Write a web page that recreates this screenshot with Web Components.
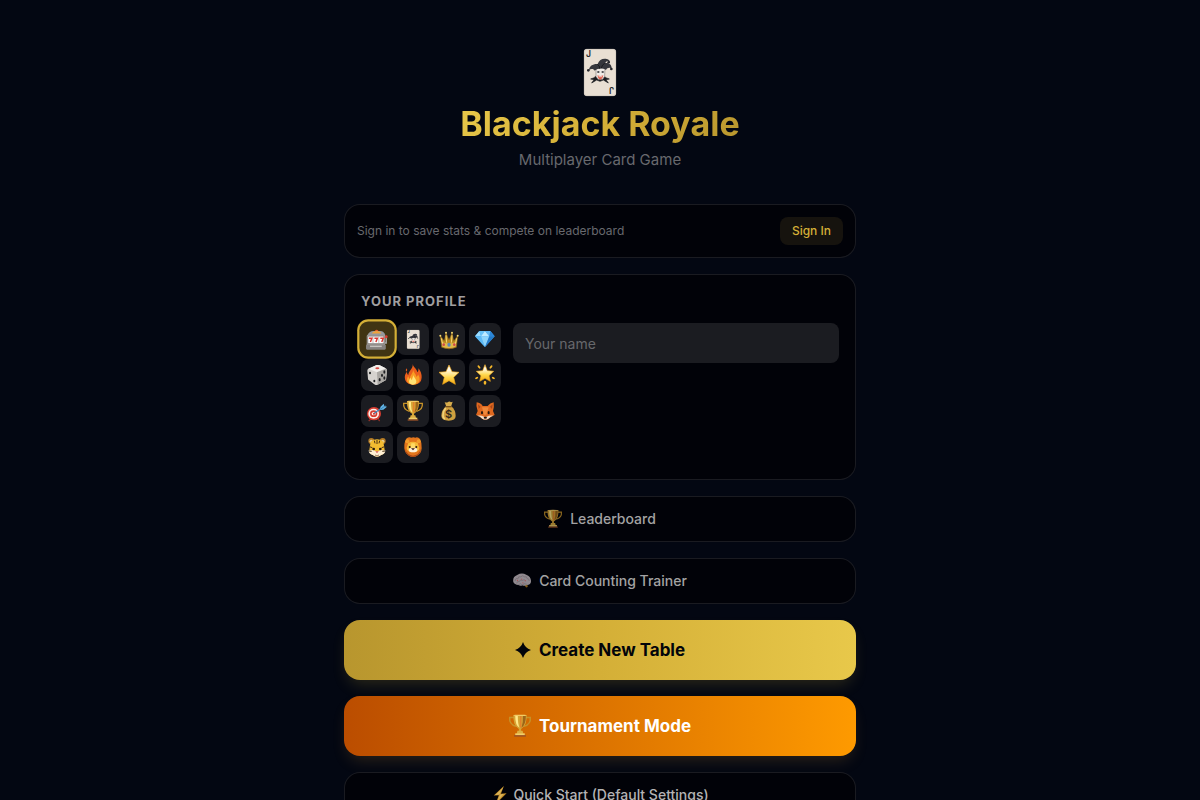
<!DOCTYPE html>
<html lang="en">
<head>
<meta charset="utf-8">
<meta name="viewport" content="width=device-width, initial-scale=1">
<title>Blackjack Royale</title>
<style>
  :root {
    --bg: #030712;
    --panel: #010208;
    --line: rgba(255, 255, 255, .1);
    --gold: #d4af37;
    --gold-light: #e8c84a;
    --gold-dark: #b8962e;
  }
  body {
    margin: 0;
    min-height: 100vh;
    background: var(--bg);
    color: #fff;
    font-family: Inter, "Liberation Sans", sans-serif;
    font-size: 14px;
    line-height: 20px;
  }
</style>
</head>
<body>
<lobby-page></lobby-page>

<script>
const JOKER = `
  <rect width="96" height="141" rx="8" fill="#e9dfd3"/>
  <rect x="1" y="1" width="94" height="139" rx="7" fill="none" stroke="#cfc6bb" stroke-width="2"/>
  <text x="6" y="25" font-family="Inter, sans-serif" font-size="26" font-weight="600" fill="#25272c">J</text>
  <text x="-90" y="-115" transform="rotate(180)" font-family="Inter, sans-serif" font-size="26" font-weight="600" fill="#25272c">J</text>
  <path d="M48 97l-10-4-15 9 7-10-10-2 11-4 3-4 14 9 14-9 3 4 11 4-10 2 7 10-15-9z" fill="#1b1c20" stroke="#1b1c20" stroke-width="2"/>
  <path d="M36 57h27l-1 25-6 9h-14l-6-9z" fill="#f0ebe6" stroke="#8d8783" stroke-width="2"/>
  <path d="M40 79q9 4 18 0l-3 9-6 4-6-4z" fill="#e0604e"/>
  <path d="M44 83h10" stroke="#fff" stroke-width="2"/>
  <path d="M40 69h6M53 69h6" stroke="#26272b" stroke-width="4"/>
  <path d="M32 65c-3-6-10-7-17-2 1-12 12-19 26-18 4-12 13-17 24-16 9 1 13 5 13 10-7-4-12-2-14 3 13-1 19 6 19 16-8-4-14-1-17 5-10-6-24-6-34 2z" fill="#35363c"/>
  <path d="M40 46q8 4 7 13M62 43q-8 4-10 14" stroke="#191a1e" stroke-width="3" fill="none"/>
  <circle cx="13" cy="64" r="4" fill="#25262b"/><circle cx="74" cy="40" r="4" fill="#25262b"/><circle cx="82" cy="60" r="4" fill="#25262b"/>`;

const ICONS = {
  slot: `
    <path d="M73 43v16H67" fill="none" stroke="#aaa9aa" stroke-width="4"/><circle cx="73" cy="42" r="4" fill="#dc3b32"/>
    <path d="M23 36q4-9 15-10h19q10 1 13 10v5H23z" fill="#96989d"/><path d="M34 33q3-7 13-7t13 7z" fill="#f2a33a"/><path d="M42 26q5-6 10 0z" fill="#e8592c"/>
    <rect x="20" y="37" width="50" height="35" rx="3" fill="#a8a5a2"/><rect x="23" y="40" width="44" height="21" fill="#fff" stroke="#706c68" stroke-width="2"/>
    <path d="M37 41v19M53 41v19" stroke="#aaa" stroke-width="2"/>
    <path d="M26 46h8l-4 10M41 46h8l-4 10M57 46h8l-4 10" fill="none" stroke="#d9362e" stroke-width="4"/>
    <rect x="18" y="63" width="54" height="14" rx="3" fill="#85827f"/><path d="M29 68h32" stroke="#c7c4c0" stroke-width="4"/>`,
  joker: `<g transform="translate(30 21) scale(.39 .4)">${JOKER}</g>`,
  crown: `
    <path d="M22 38l12 17 5-25 9 22 9-22 5 25 12-17-4 35q-22 9-44 0z" fill="#c8992b" stroke="#8f6518" stroke-width="2"/>
    <path d="M25 45l9 12 5-20 9 17 9-17 5 20 9-12-1 14H26z" fill="#b8871f"/>
    <path d="M27 57q21 9 42 0l-2 14q-19 8-38 0z" fill="#dfb94a"/>
    <path d="M25 46l5 22M39 37l2 22M57 37l-2 22M71 46l-5 22" stroke="#f4d872" stroke-width="3"/>
    <circle cx="22" cy="38" r="3" fill="#f4d872"/><circle cx="39" cy="29" r="3" fill="#f4d872"/><circle cx="57" cy="29" r="3" fill="#f4d872"/><circle cx="74" cy="38" r="3" fill="#f4d872"/>
    <ellipse cx="48" cy="65" rx="5" ry="6" fill="#5c86b8"/><circle cx="32" cy="65" r="4" fill="#d44848"/><circle cx="64" cy="65" r="4" fill="#d44848"/>`,
  gem: `
    <path d="M31 24h33l13 16-29 32-30-32z" fill="#41a3ec"/><path d="M31 24l-13 16h18z" fill="#9bdcff"/><path d="M31 24h17L36 40z" fill="#67c2f8"/>
    <path d="M48 24l13 16H36z" fill="#bfeaff"/><path d="M48 24h16l-3 16z" fill="#63b9f4"/><path d="M64 24l13 16H61z" fill="#2c86d8"/>
    <path d="M18 40h18l12 32z" fill="#5dbaf5"/><path d="M36 40h25L48 72z" fill="#8ed4fb"/><path d="M61 40h16L48 72z" fill="#247ac9"/>`,
  die: `
    <path d="M22 29l25-11q5-1 9 1l18 9q4 2 4 7l-3 28-25 14q-4 2-8 0L24 64q-3-2-3-5l-2-24q0-4 3-6z" fill="#d6d3cf"/>
    <path d="M22 29l25-11q5-1 9 1l18 9-26 12z" fill="#f1efec"/><path d="M48 40l28-11q2 2 2 6l-3 28-25 14z" fill="#aaa7a3"/>
    <ellipse cx="49" cy="28" rx="6" ry="3" fill="#d94b43"/>
    <g fill="#202124"><ellipse cx="27" cy="42" rx="3" ry="4"/><ellipse cx="40" cy="66" rx="3" ry="4"/><ellipse cx="70" cy="39" rx="3" ry="5"/><ellipse cx="63" cy="49" rx="3" ry="5"/><ellipse cx="56" cy="62" rx="3" ry="5"/><ellipse cx="70" cy="57" rx="3" ry="5"/></g>`,
  fire: `
    <path d="M47 15c2 10 13 14 14 25 3-3 4-7 3-12 9 9 13 26 8 37-4 8-13 12-24 12-13 0-22-7-24-17-2-9 1-16 6-22 0 5 1 8 4 10 0-13 15-18 13-33z" fill="#ea5e1c"/>
    <path d="M48 32c2 9 10 13 10 22 3-2 5-5 5-8 6 9 7 19 1 25-8 8-27 7-32-1-4-6-2-14 2-19 1 5 2 7 5 8-1-10 10-16 9-27z" fill="#f99d24"/>
    <path d="M49 48c1 7 10 13 9 21-1 6-6 8-11 8-7 0-12-5-11-11 1-5 4-8 6-10 0 4 1 6 3 7 0-6 4-9 4-15z" fill="#ffe374"/>
    <path d="M29 28q-5 6-1 10 5-4 1-10z" fill="#ea5e1c"/>`,
  star: `
    <defs><linearGradient id="s" x1="0" y1="0" x2="0" y2="1"><stop offset=".25" stop-color="#fff9e6"/><stop offset=".65" stop-color="#ffd84d"/><stop offset="1" stop-color="#f4a50e"/></linearGradient></defs>
    <path d="M48 18l9 20 21 2-16 15 5 21-19-11-19 11 5-21-16-15 21-2z" fill="url(#s)" stroke="#f2a91b" stroke-width="2" stroke-linejoin="round"/>`,
  glow: `
    <defs><linearGradient id="g" x1="0" y1="0" x2="0" y2="1"><stop offset=".25" stop-color="#fff9e6"/><stop offset=".6" stop-color="#ffd84d"/><stop offset="1" stop-color="#f4a50e"/></linearGradient></defs>
    <path d="M48 17l7 18 19 2-14 13 4 17-16-9-16 9 4-17-14-13 19-2z" fill="url(#g)" stroke="#f2a91b" stroke-width="2" stroke-linejoin="round"/>
    <g fill="#f5b72a"><ellipse cx="30" cy="24" rx="3" ry="6" transform="rotate(-38 30 24)"/><ellipse cx="66" cy="24" rx="3" ry="6" transform="rotate(38 66 24)"/><ellipse cx="23" cy="57" rx="3" ry="5" transform="rotate(60 23 57)"/><ellipse cx="73" cy="57" rx="3" ry="5" transform="rotate(-60 73 57)"/><ellipse cx="48" cy="71" rx="4" ry="6"/></g>`,
  target: `
    <path d="M29 73l-6 5M52 73l4 5" stroke="#913026" stroke-width="4"/>
    <ellipse cx="39" cy="56" rx="21" ry="20" fill="#d73d31"/><ellipse cx="38" cy="56" rx="16" ry="15" fill="#fff0e9"/><ellipse cx="38" cy="56" rx="11" ry="10" fill="#d73d31"/><ellipse cx="38" cy="56" rx="6" ry="5" fill="#fff0e9"/><circle cx="39" cy="56" r="3" fill="#c62d26"/>
    <path d="M40 55l25-18" stroke="#3885bd" stroke-width="4"/><path d="M58 36l10-10 2 7 8 2-11 9-9 1z" fill="#62b4e4"/><path d="M60 42l14-11" stroke="#28699b" stroke-width="2"/>`,
  trophy: `
    <path d="M32 25H20q-2 18 17 24M64 25h12q2 18-17 24" fill="none" stroke="#c69229" stroke-width="4"/>
    <path d="M30 18h36q1 26-11 35l-4 3v9h-6v-9l-4-3Q29 44 30 18z" fill="#d5a334"/>
    <path d="M35 20h7q0 24 5 33-12-5-12-33z" fill="#ffe888"/><path d="M56 20h8q0 25-12 33 5-13 4-33z" fill="#9b651a"/><path d="M48 20h4v32h-4z" fill="#e4812b"/>
    <ellipse cx="48" cy="19" rx="18" ry="2" fill="#f3cb65"/><path d="M41 61h14l2 8H39z" fill="#dcae40"/><path d="M35 68h26v6H35z" fill="#f1cf69"/><path d="M32 73h32v4H32z" fill="#985026"/>`,
  money: `
    <path d="M35 21q6 3 10 0 5-3 9 1l5-2-5 15H40z" fill="#d8ad4d"/>
    <path d="M39 34h16q13 11 13 29 0 14-21 14T25 63q0-17 14-29z" fill="#cfa03f"/><path d="M38 39q-8 10-8 22 0 9 6 11" fill="none" stroke="#f1d17b" stroke-width="5"/>
    <path d="M38 35h18" stroke="#7b5420" stroke-width="4"/><text x="47" y="69" text-anchor="middle" font-family="Inter, sans-serif" font-size="33" font-weight="600" fill="#33291c">$</text>`,
  fox: `
    <path d="M23 22q13 2 18 11h15q7-9 18-11 2 13-2 26l5 12q-11 3-18 11-10 6-20 0-6-8-18-11l5-12q-6-14-3-26z" fill="#df681f"/>
    <path d="M27 28l8 7-6 7zM71 28l-8 7 6 7z" fill="#a8481b"/><path d="M39 37h20l-7 22h-7z" fill="#f0893b"/>
    <path d="M24 62q12-2 21 3l4 2 4-2q9-5 21-3-10 2-16 9-9 5-18 0-6-7-16-9z" fill="#f4dfc9"/>
    <ellipse cx="39" cy="53" rx="3" ry="5" fill="#24170f"/><ellipse cx="59" cy="53" rx="3" ry="5" fill="#24170f"/><ellipse cx="49" cy="68" rx="5" ry="3" fill="#1d1512"/>`,
  tiger: `
    <circle cx="31" cy="30" r="9" fill="#b57b24"/><circle cx="65" cy="30" r="9" fill="#b57b24"/><circle cx="31" cy="31" r="5" fill="#e6cd91"/><circle cx="65" cy="31" r="5" fill="#e6cd91"/>
    <path d="M29 32q19-14 38 0l4 25q2 11-11 15-12 10-24 0-13-4-11-15z" fill="#f3bc31"/>
    <path d="M23 58l14-1 11 5 11-5 14 1q0 11-12 14-13 10-26 0-12-3-12-14z" fill="#fff0d5"/>
    <path d="M48 27v12M40 29l2 8M56 29l-2 8M25 47l9 3M71 47l-9 3M24 60l8 1M72 60l-8 1" stroke="#493115" stroke-width="3"/>
    <circle cx="38" cy="54" r="4" fill="#241c10"/><circle cx="58" cy="54" r="4" fill="#241c10"/><path d="M43 61h10l-5 6z" fill="#d95f5c"/><path d="M42 72q6 5 12 0" stroke="#6e452a" stroke-width="2" fill="none"/>`,
  lion: `
    <path d="M29 22q7-5 14-2 6-3 12 0 8-3 14 4 6 11 5 28-1 16-14 22-12 7-24 0-12-6-14-22-1-19 7-30z" fill="#e3751c"/>
    <path d="M24 53q5 18 24 21 19-3 24-21 0 14-12 21-12 7-24 0-11-6-12-21z" fill="#a84616"/>
    <circle cx="31" cy="31" r="6" fill="#f19d2b"/><circle cx="65" cy="31" r="6" fill="#f19d2b"/>
    <path d="M34 36q14-8 28 0l5 14q0 13-19 14-19-1-19-14z" fill="#f6bb38"/><path d="M43 37h10l2 16H41z" fill="#ffda65"/>
    <ellipse cx="48" cy="57" rx="13" ry="7" fill="#fff0d8"/><circle cx="38" cy="48" r="3" fill="#2b1b12"/><circle cx="58" cy="48" r="3" fill="#2b1b12"/><path d="M42 52h12l-6 6z" fill="#3c1c14"/>`,
  brain: `
    <path d="M54 60l12-2 1 10q-7 4-9-4z" fill="#b8801f"/>
    <path d="M19 51q-3-17 13-23 15-9 30-1 15 5 16 20 1 13-14 14-7 5-15 1-6 4-13-1-13-1-17-10z" fill="#cdc3c8"/>
    <path d="M25 48q1-11 9-7 1-10 10-7 7-7 12 0 9-3 9 6 8 0 7 8M30 56q1-8 9-6 3-9 10-4 7-6 11 2M36 60q8-6 13 1 6-7 15-2" fill="none" stroke="#958a92" stroke-width="2"/>
    <circle cx="33" cy="46" r="2" fill="#f27573"/><circle cx="47" cy="42" r="2" fill="#f27573"/><circle cx="59" cy="47" r="2" fill="#f27573"/><circle cx="51" cy="54" r="2" fill="#f27573"/>`,
  spark: `<path d="M48 18q7 22 30 30-23 8-30 30-7-22-30-30 23-8 30-30z" fill="#02040a"/>`,
  bolt: `<path d="M61 18L27 50l17-1-11 30 37-37-19 2z" fill="#e7a52c"/><path d="M59 22L32 48l16-2-9 23 22-24-15 1z" fill="#ffd46a"/>`,
};

class GameIcon extends HTMLElement {
  connectedCallback() {
    const name = this.getAttribute('name');
    const root = this.attachShadow({ mode: 'open' });
    const box = name === 'card' ? '0 0 96 141' : '18 18 60 60';
    root.innerHTML = `
      <style>
        :host { display: block; flex: none; width: var(--icon-size, 20px); height: var(--icon-size, 20px); }
        :host([name="card"]) { width: 32px; height: 47px; }
        svg { display: block; width: 100%; height: 100%; overflow: visible; }
      </style>
      <svg viewBox="${box}" aria-hidden="true">${name === 'card' ? JOKER : ICONS[name]}</svg>`;
  }
}
customElements.define('game-icon', GameIcon);

class LobbyHeader extends HTMLElement {
  connectedCallback() {
    this.attachShadow({ mode: 'open' }).innerHTML = `
      <style>
        :host { display: block; text-align: center; margin-bottom: 16px; }
        .logo { display: flex; justify-content: center; align-items: end; height: 48px; margin-bottom: 8px; }
        h1 { margin: 0 auto 4px; width: max-content; max-width: 100%; font-size: 34px; line-height: 40px; font-weight: 700;
          background: linear-gradient(135deg, var(--gold-light), var(--gold) 50%, var(--gold-dark));
          background-clip: text; -webkit-background-clip: text; color: transparent; }
        p { margin: 0; font-size: 15px; line-height: 24px; color: #68696e; }
      </style>
      <header>
        <div class="logo"><game-icon name="card"></game-icon></div>
        <h1><slot></slot></h1>
        <p><slot name="tagline"></slot></p>
      </header>`;
  }
}
customElements.define('lobby-header', LobbyHeader);

class SignInBar extends HTMLElement {
  connectedCallback() {
    this.attachShadow({ mode: 'open' }).innerHTML = `
      <style>
        :host { display: flex; justify-content: space-between; align-items: center; gap: 12px;
          padding: 12px; border: 1px solid var(--line); border-radius: 16px; background: var(--panel);
          font-size: 12px; line-height: 16px; color: #68696e; }
        button { flex: none; padding: 6px 12px; border: 0; border-radius: 8px; background: #16130e; color: var(--gold);
          font: inherit; font-weight: 500; cursor: pointer; }
      </style>
      <span><slot></slot></span>
      <button type="button">Sign In</button>`;
  }
}
customElements.define('sign-in-bar', SignInBar);

class AvatarPicker extends HTMLElement {
  connectedCallback() {
    const names = ['slot', 'joker', 'crown', 'gem', 'die', 'fire', 'star', 'glow', 'target', 'trophy', 'money', 'fox', 'tiger', 'lion'];
    const root = this.attachShadow({ mode: 'open' });
    root.innerHTML = `
      <style>
        :host { display: grid; flex: none; grid-template-columns: repeat(4, 32px); grid-auto-rows: 32px; gap: 4px; }
        button { display: flex; align-items: center; justify-content: center; padding: 0; border: 0; border-radius: 8px;
          background: #1b1c21; cursor: pointer; }
        button[aria-pressed="true"] { background: #403413; box-shadow: 0 0 0 2px var(--gold); transform: scale(1.1); }
      </style>
      ${names.map((n, i) => `<button type="button" aria-label="${n}" aria-pressed="${i === 0}"><game-icon name="${n}"></game-icon></button>`).join('')}`;
    root.addEventListener('click', (e) => {
      const hit = e.target.closest('button');
      if (hit) root.querySelectorAll('button').forEach((b) => b.setAttribute('aria-pressed', b === hit));
    });
  }
}
customElements.define('avatar-picker', AvatarPicker);

class ProfileCard extends HTMLElement {
  connectedCallback() {
    this.attachShadow({ mode: 'open' }).innerHTML = `
      <style>
        :host { display: block; padding: 16px; border: 1px solid var(--line); border-radius: 16px; background: var(--panel); }
        h2 { margin: 0 0 12px; font-size: 13px; line-height: 20px; font-weight: 700; letter-spacing: 1px;
          text-transform: uppercase; color: #a09fa0; }
        .row { display: flex; align-items: flex-start; gap: 12px; }
        label { flex: 1; min-width: 0; }
        input { display: block; box-sizing: border-box; width: 100%; height: 40px; padding: 0 12px; border: 0; border-radius: 8px;
          background: #1b1c21; color: #fff; font: inherit; outline-color: var(--gold); }
        input::placeholder { color: #67686c; opacity: 1; }
      </style>
      <h2><slot></slot></h2>
      <div class="row">
        <avatar-picker></avatar-picker>
        <label><input type="text" placeholder="Your name" aria-label="Your name"></label>
      </div>`;
  }
}
customElements.define('profile-card', ProfileCard);

class ActionButton extends HTMLElement {
  connectedCallback() {
    this.attachShadow({ mode: 'open' }).innerHTML = `
      <style>
        :host { display: block; --icon-size: 18px; }
        button { display: flex; justify-content: center; align-items: center; gap: 8px; width: 100%; padding: 12px;
          border: 1px solid var(--line); border-radius: 16px; background: var(--panel); color: #a3a2a3;
          font: inherit; font-weight: 500; cursor: pointer; }
        game-icon { opacity: .7; }
        :host([kind="quick"]) button { gap: 4px; color: #b4b3b4; }
        :host([kind="quick"]) game-icon { opacity: .85; }
        :host([kind="gold"]) button, :host([kind="orange"]) button { padding: 16px; border: 0; font-size: 17px; line-height: 28px; font-weight: 700; }
        :host([kind="gold"]) game-icon, :host([kind="orange"]) game-icon { opacity: 1; }
        :host([kind="gold"]) { --icon-size: 16px; }
        :host([kind="gold"]) button { background: linear-gradient(90deg, var(--gold-dark), var(--gold) 50%, var(--gold-light)); color: #02040a;
          box-shadow: 0 8px 16px -4px rgba(212, 175, 55, .2); }
        :host([kind="orange"]) { --icon-size: 22px; }
        :host([kind="orange"]) button { background: linear-gradient(90deg, #bb4d00, #fe9a00); color: #fff;
          box-shadow: 0 8px 16px -4px rgba(212, 145, 55, .2); }
      </style>
      <button type="button"><game-icon name="${this.getAttribute('icon')}"></game-icon><span><slot></slot></span></button>`;
  }
}
customElements.define('action-button', ActionButton);

class LobbyPage extends HTMLElement {
  connectedCallback() {
    this.attachShadow({ mode: 'open' }).innerHTML = `
      <style>
        :host { display: block; }
        main { display: flex; flex-direction: column; gap: 16px; box-sizing: border-box; max-width: 544px; margin: 0 auto; padding: 48px 16px; }
      </style>
      <main>
        <lobby-header>Blackjack Royale<span slot="tagline">Multiplayer Card Game</span></lobby-header>
        <sign-in-bar>Sign in to save stats &amp; compete on leaderboard</sign-in-bar>
        <profile-card>Your Profile</profile-card>
        <action-button icon="trophy">Leaderboard</action-button>
        <action-button icon="brain">Card Counting Trainer</action-button>
        <action-button kind="gold" icon="spark">Create New Table</action-button>
        <action-button kind="orange" icon="trophy">Tournament Mode</action-button>
        <action-button kind="quick" icon="bolt">Quick Start (Default Settings)</action-button>
      </main>`;
  }
}
customElements.define('lobby-page', LobbyPage);
</script>
</body>
</html>
